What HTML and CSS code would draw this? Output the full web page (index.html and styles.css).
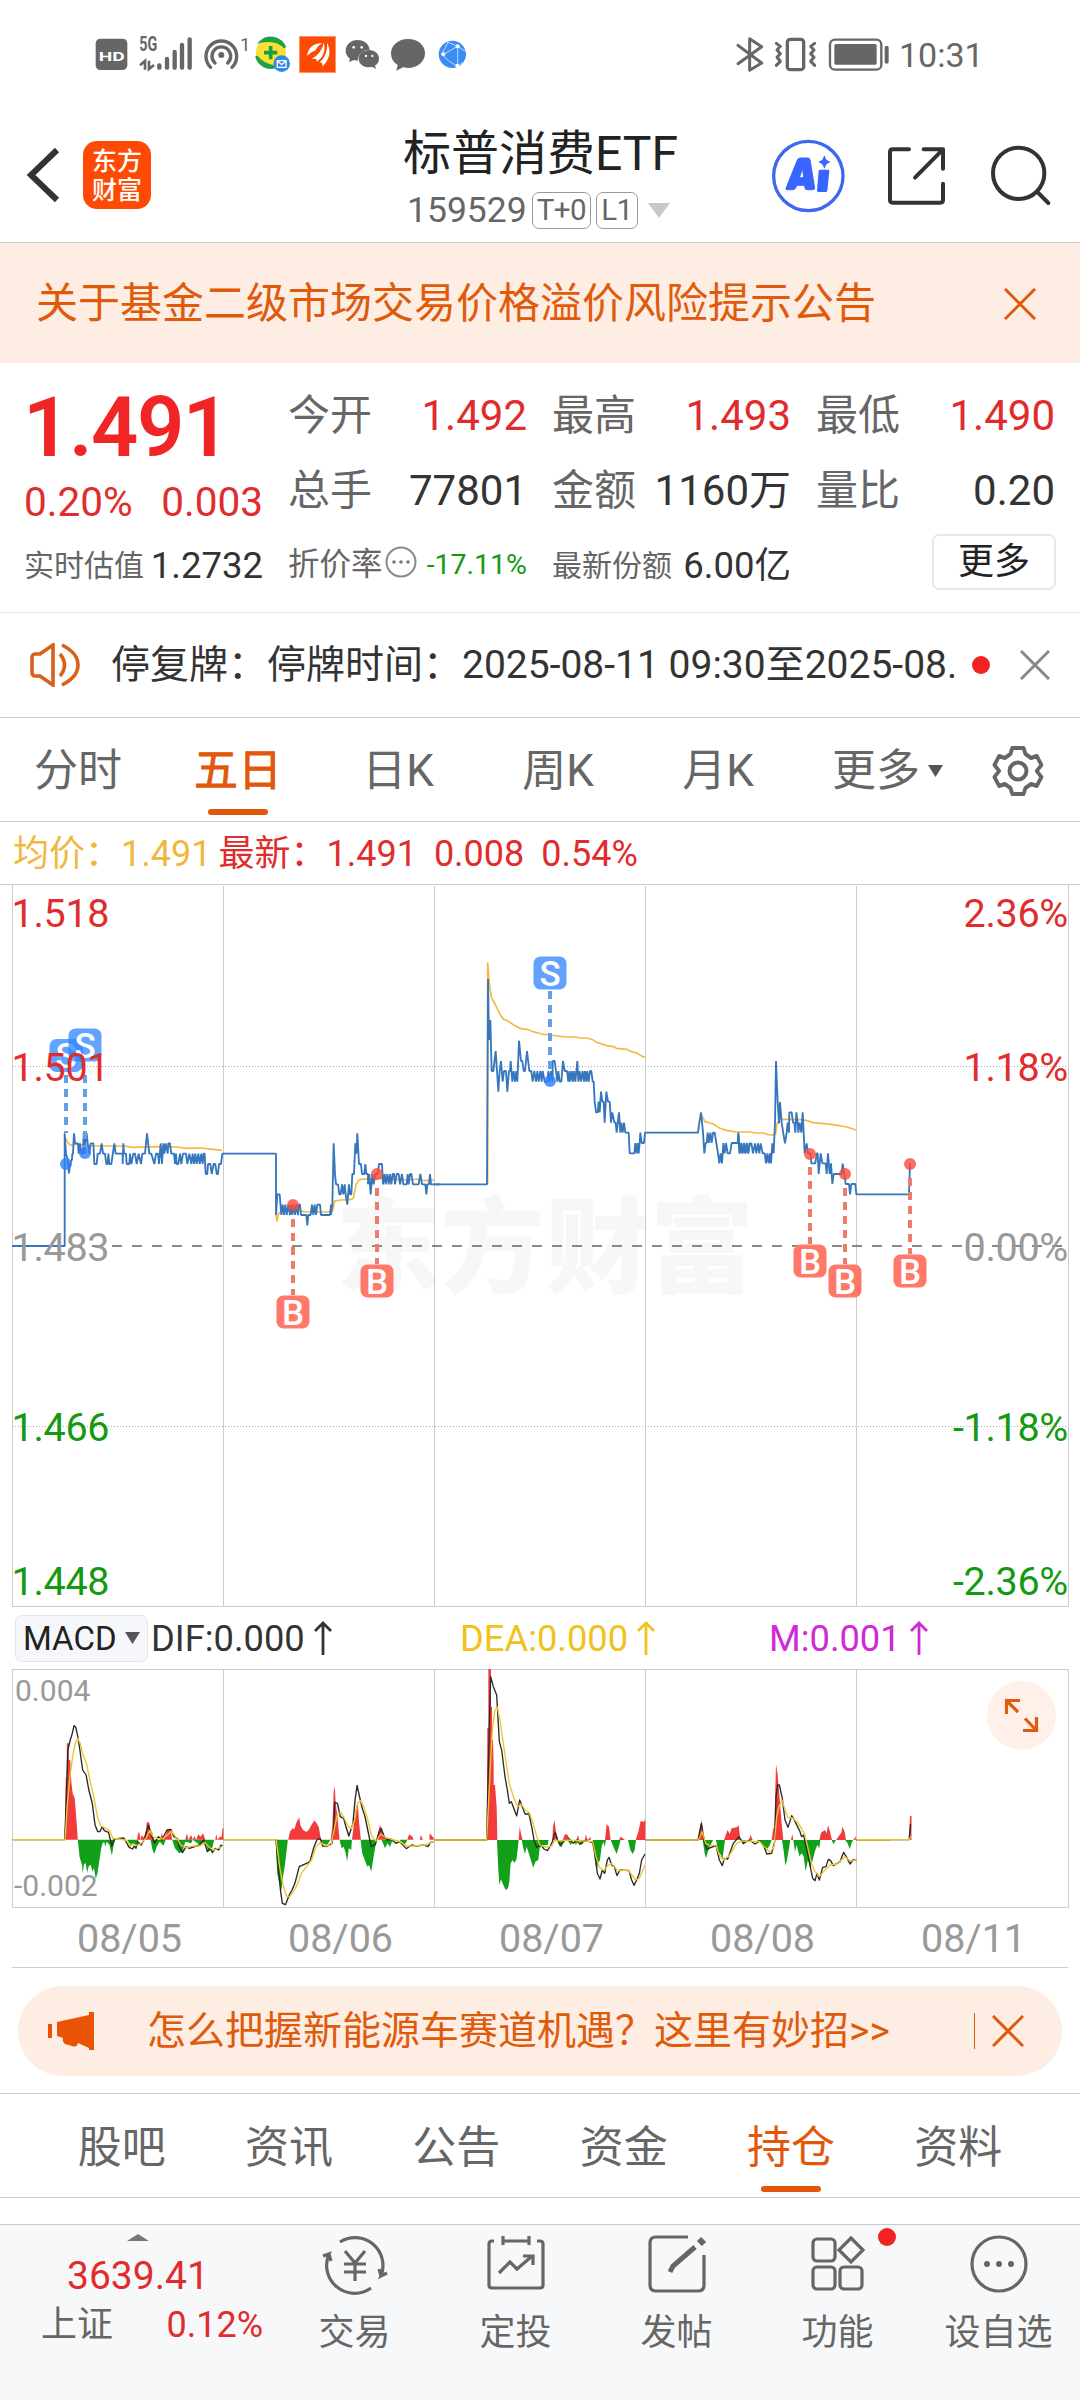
FILE: index.html
```html
<!DOCTYPE html>
<html lang="zh-CN">
<head>
<meta charset="utf-8">
<title>标普消费ETF 159529</title>
<link rel="stylesheet" href="styles.css">
</head>
<body>
<div class="screen">
  <div class="status">
    <svg class="status-left" viewBox="0 0 1200 180">
      <rect x="32" y="41" width="95" height="94" rx="14" fill="#666"/>
      <text x="41" y="108" class="st-hd" textLength="78" lengthAdjust="spacingAndGlyphs">HD</text>
      <text x="163" y="79" class="st-5g" textLength="54" lengthAdjust="spacingAndGlyphs">5G</text>
      <g fill="none" stroke="#666" stroke-width="8"><path d="M180 134V108L165 121M192 107V132L207 120"/></g>
      <g stroke="#666" stroke-width="13" stroke-linecap="round"><path d="M223 121V128M246 102V128M269 81V128M291 60V128M314 43V128"/></g>
      <g fill="none" stroke="#666" stroke-width="10" stroke-linecap="round"><path d="M377 127A46 46 0 1 1 441 127M390 114A28 28 0 1 1 428 114"/></g>
      <circle cx="409" cy="90" r="9" fill="#666"/>
      <text x="465" y="78" class="st-one">1</text>
      <circle cx="558" cy="83" r="45" fill="#fbe032"/>
      <path d="M527 50A45 45 0 0 1 600 68Q575 40 527 50ZM514 94A45 45 0 0 0 572 126Q534 120 514 94Z" fill="#1fa045" stroke="#1fa045" stroke-width="7"/>
      <path d="M557 63V103M537 83H577" stroke="#12a04c" stroke-width="11"/>
      <circle cx="590" cy="116" r="25" fill="#2e8be6"/>
      <path d="M577 107H603V127H577ZM577 107L590 119L603 107" fill="none" stroke="#fff" stroke-width="4"/>
      <rect x="643" y="34" width="109" height="109" fill="#ff4a05" stroke="#f5a080" stroke-width="2"/>
      <path d="M666 92Q672 55 712 54Q696 64 692 76Q680 80 666 92ZM680 102Q712 82 716 53Q726 88 695 110Q698 98 680 102ZM704 112Q730 88 726 53Q746 90 712 125Q714 112 704 112Z" fill="#fff"/>
      <path d="M818 45c-20 0-36 14-36 32 0 10 5 18 13 24l-3 11 14-7 12 2c2-22 15-32 36-33-2-17-17-29-36-29z" fill="#666"/>
      <path d="M852 75c-17 0-31 11-31 26s14 26 31 26l10-1 11 6-3-10c7-5 12-12 12-21 0-15-13-26-30-26z" fill="#666"/>
      <g fill="#fff"><circle cx="806" cy="67" r="4"/><circle cx="830" cy="67" r="4"/><circle cx="843" cy="93" r="3.5"/><circle cx="862" cy="93" r="3.5"/></g>
      <path d="M969 42c-29 0-51 19-51 43 0 15 7 27 20 35l-4 17 20-10 15 2c29 0 51-19 51-44s-22-43-51-43z" fill="#666"/>
      <circle cx="1102" cy="88" r="41" fill="#3b8df5"/>
      <path d="M1089 51Q1080 74 1069 87Q1088 108 1116 124M1118 64L1075 88M1118 64V124M1089 52L1118 64L1142 80M1116 124L1134 112" fill="none" stroke="#bcd9ff" stroke-width="3"/>
      <g fill="#fff"><circle cx="1118" cy="64" r="6"/><circle cx="1075" cy="88" r="6"/><circle cx="1117" cy="122" r="6"/></g>
    </svg>
    <svg class="status-right" viewBox="0 15 540 180">
      <path d="M54 76L125 129L89 151V56L125 80L54 131" fill="none" stroke="#666" stroke-width="9" stroke-linejoin="round" stroke-linecap="round"/>
      <rect x="202" y="58" width="49" height="91" rx="9" fill="none" stroke="#666" stroke-width="10"/>
      <path d="M169 70L181 79L171 90L181 101L171 112L181 124L169 136M284 70L272 79L282 90L272 101L282 112L272 124L284 136" fill="none" stroke="#666" stroke-width="9" stroke-linejoin="round" stroke-linecap="round"/>
      <rect x="330" y="59" width="154" height="90" rx="15" fill="none" stroke="#666" stroke-width="7"/>
      <rect x="343" y="72" width="127" height="62" rx="5" fill="#666"/>
      <rect x="494" y="77" width="12" height="54" rx="6" fill="#666"/>
    </svg>
    <span class="clock">10:31</span>
  </div>

  <header class="header">
    <svg class="back" viewBox="0 0 40 60"><path d="M34 5L8 30L34 55" fill="none" stroke="#333" stroke-width="6"/></svg>
    <div class="logo"><span>东方</span><span>财富</span></div>
    <div class="title">
      <h1>标普消费ETF</h1>
      <div class="code"><span>159529</span><i>T+0</i><i>L1</i><svg viewBox="0 0 22 15"><path d="M0 0H22L11 15Z" fill="#c8c8c8"/></svg></div>
    </div>
    <svg class="actions" viewBox="0 340 900 240">
      <circle cx="112" cy="466" r="104" fill="none" stroke="#3f68f0" stroke-width="10"/>
      <path d="M45 503L80 416Q83 412 90 412H110Q116 412 117 417L131 503Q131 507 125 507H107Q103 507 102 502L101 494H78L73 503Q71 507 66 507H48Q43 507 45 503ZM85 471H98L95 443Z" fill="#3864ff" stroke="#3864ff" stroke-width="3"/>
      <path d="M147 447H171Q175 447 175 451L169 510Q168 514 164 514H142Q138 514 138 509L143 451Q144 447 147 447Z" fill="#3864ff"/>
      <path d="M160 404L166 417L178 424L166 431L160 444L154 431L142 424L154 417Z" fill="#3864ff"/>
      <g fill="none" stroke="#333" stroke-width="12" stroke-linecap="round" stroke-linejoin="round"><path d="M414 386H365Q357 386 357 394V538Q357 546 365 546H508Q516 546 516 538V489M458 386H516V444M516 386L432 471"/><circle cx="743" cy="458" r="77"/><path d="M798 513L832 547"/></g>
    </svg>
  </header>

  <div class="alert"><span>关于基金二级市场交易价格溢价风险提示公告</span><svg viewBox="0 0 32 32"><path d="M1 1L31 31M31 1L1 31" stroke="#e2580a" stroke-width="3"/></svg></div>

  <section class="quote">
    <div class="price-col"><div class="price">1.491</div><div class="change"><span>0.20%</span><span>0.003</span></div></div>
    <div class="cell up"><label>今开</label><b>1.492</b></div>
    <div class="cell up"><label>最高</label><b>1.493</b></div>
    <div class="cell up"><label>最低</label><b>1.490</b></div>
    <div class="cell"><label>总手</label><b>77801</b></div>
    <div class="cell"><label>金额</label><b>1160万</b></div>
    <div class="cell"><label>量比</label><b>0.20</b></div>
    <div class="cell sm"><label>实时估值</label><b>1.2732</b></div>
    <div class="cell sm rate"><label>折价率</label><svg viewBox="0 0 32 32"><circle cx="16" cy="16" r="14.5" fill="none" stroke="#888" stroke-width="2"/><g fill="#777"><circle cx="9" cy="16" r="1.8"/><circle cx="16" cy="16" r="1.8"/><circle cx="23" cy="16" r="1.8"/></g></svg><b>-17.11%</b></div>
    <div class="cell sm"><label>最新份额</label><b>6.00亿</b></div>
    <div class="more-cell"><button>更多</button></div>
  </section>

  <div class="notice">
    <svg class="speaker" viewBox="0 0 50 44" fill="none" stroke="#d9601a" stroke-width="3.6"><path d="M23 2L10 11H5Q2 11 2 15V29Q2 33 5 33H10L23 42Z"/><path d="M30 11Q39 22 30 33M32 2Q48 10 48 22T32 42"/></svg>
    <span class="notice-text">停复牌：停牌时间：2025-08-11 09:30至2025-08.</span>
    <i class="dot"></i>
    <svg class="close" viewBox="0 0 30 30"><path d="M1 1L29 29M29 1L1 29" stroke="#888" stroke-width="3"/></svg>
  </div>

  <nav class="periods">
    <span>分时</span><span class="on">五日</span><span>日K</span><span>周K</span><span>月K</span>
    <span class="drop">更多<svg viewBox="0 0 15 12"><path d="M0 0H15L7.500 12Z" fill="#555"/></svg></span>
    <svg class="gear" viewBox="0 0 52 52" fill="none" stroke="#666" stroke-width="4" stroke-linejoin="round"><path d="M20 3H32L34 9L40 13L46 11L51 20L46 26L51 32L46 41L40 39L34 43L32 49H20L18 43L12 39L6 41L1 32L6 26L1 20L6 11L12 13L18 9Z" transform="translate(1.500 0) scale(.94 1)"/><circle cx="26" cy="26" r="8.500"/></svg>
  </nav>

  <div class="legend"><span class="avg">均价：1.491</span><span>最新：1.491</span><span>0.008</span><span>0.54%</span></div>

  <svg class="chart" viewBox="0 884 1080 723">
    <text x="336" y="1285" class="watermark" textLength="418" lengthAdjust="spacing">东方财富</text>
    <g stroke="#ccc" stroke-width="1" fill="none">
      <path d="M0 884.500H1080M12.500 884V1606M223.500 886V1606M434.500 886V1606M645.500 886V1606M856.500 886V1606M1068.500 884V1606M12 1606.500H1069"/>
      <path d="M12 1066.500H1068M12 1426.500H1068" stroke-dasharray="1 2" stroke="#aaa"/>
    </g>
    <path d="M12 1246H1068" stroke="#888" stroke-width="2" stroke-dasharray="10 10"/>
    <g fill="none" stroke="#f2b944" stroke-width="5">
      <path transform="translate(0 880) scale(.33333)" d="M194 770L202 785L208 793L215 796L225 792L250 795L280 798L375 798L395 802L470 800L530 801L560 805L600 804L640 808L666 811M828 1005L831 1025L836 1000L850 990L900 992L915 996H985L998 992L1004 963L1025 960L1050 959L1060 955L1068 915L1074 903L1085 897L1110 898L1135 895L1170 898L1230 900L1250 897L1270 902L1303 900"/>
      <path transform="translate(420 880) scale(.33333)" d="M203 913V247L208 310L214 352L225 372L241 405L250 417L265 424L280 434L300 445L320 448L340 455L365 462L390 465L430 470L465 471L480 474L500 474L518 479L530 487L560 497L580 500L590 505L620 508L635 515L650 519L670 531H676"/>
      <path transform="translate(640 1000) scale(.33333)" d="M184 345L195 365L210 369L220 372L240 385L260 391L290 396H330L345 399H370L385 404L400 405L407 400L411 370L420 358L440 358L490 359L520 368L580 374L620 381L649 390"/>
    </g>
    <g fill="none" stroke="#3576bd" stroke-width="5.500" stroke-linejoin="bevel">
      <path transform="translate(0 880) scale(.33333)" d="M37 1098H194V760L198 821L203 838L207 880L210 852L216 838L217 821L219 821L222 760L225 790H234L236 821L240 790L244 821H249L251 760L254 821L258 760L260 760L263 790L268 821L272 790H280L283 852L290 852L293 821H300L305 790L309 821H315L319 852H323L325 821L328 852L334 852L343 790L347 821H368V852L370 790L372 821H378L380 852H388L390 821L394 852L400 821H405L410 852L416 821L423 852L427 821H435L441 760L448 821H454L463 852L468 821H474L477 852L482 790L486 852L490 790L493 821L497 790L503 821L505 790L510 790L514 821H522L525 852L528 821L530 852H535L540 821L544 852L549 821H558L562 852L568 821L574 852L578 821L582 852L586 821L590 852L595 821L599 852L604 821L608 852L611 821L614 821L617 882L622 882L624 852H631L635 882L641 852H646L650 882H654L657 852H663L667 821H828V1005L832 943H839L844 1005L848 974L852 1005L856 974L860 1005L865 974L870 1005L873 974L877 1005L881 974L885 1005L889 974L894 1005L896 974H900L903 1005H919L922 1036L925 1005H932L936 974L940 1005L944 974L948 1005L952 974H960L963 1005H990L993 974V1005L997 974L1001 790L1005 882L1008 913H1014L1018 943H1022L1026 913L1030 943L1034 913L1037 943L1042 974L1047 913L1050 943L1054 943L1057 882L1062 882L1066 790L1069 821L1072 760L1077 852L1083 852L1086 882H1093L1096 852L1099 882L1104 882V913L1108 882L1112 943L1117 882L1121 913L1126 882L1133 882L1137 852H1146L1149 913L1154 882L1157 913L1162 882L1166 913L1170 882L1174 913L1178 882L1182 882L1185 913L1190 882L1196 882L1200 913L1206 882L1210 913H1220L1223 882L1226 913L1230 882L1234 882L1239 913H1256L1261 882L1266 913H1276L1279 943L1282 913H1287L1290 882L1293 913H1320"/>
      <path transform="translate(420 880) scale(.33333)" d="M43 913H201L204 297L207 480L211 420L215 573H220L227 513L231 573L235 635L239 573L243 543L248 605L252 573H258L262 635L267 573H270L272 543L277 605L281 573L285 605L289 573L292 605L297 482L303 543L307 543L311 573H315L321 513L328 573H334L338 605L343 573L348 605L352 573L356 605L361 573L365 605L368 573L374 605H382L385 573L389 605L393 573L398 605L398 543H404L408 573L412 605L415 573L419 605H424L429 543L434 573H441L445 605L448 573L451 605L455 573L459 605L462 573L466 605L472 543L475 605L479 573L483 605L488 573L492 605L495 573L499 605L502 573L506 605L510 573H514L518 605H521L524 665L528 697H533L536 665L539 697L543 635L547 665H551L554 728L559 635L564 665L569 665L573 728L577 697L583 728H587L590 758L597 697L601 758L604 728L608 758L612 728L616 758H626L629 820H643L646 789L650 820L653 789L656 820L659 789L661 758L665 789H672L675 758H834L838 728L843 697L849 758L853 820L857 789L860 789L863 758L867 789L871 758L875 789L879 758L884 758L889 789L894 820L898 850L902 820L906 850L910 789L914 820L918 789L923 820L930 820L935 789H953L955 758L958 820L963 789L967 820L972 789L976 820L981 789L984 820L990 789"/>
      <path transform="translate(640 1000) scale(.33333)" d="M295 400L300 460L304 430L308 460L312 430L316 460L320 430L325 460L329 430L334 430L339 460L345 430L349 460L354 430L358 460L362 430L368 460H374L378 490L382 460L386 490L390 460L393 490L397 430L401 460L405 370L408 183L413 305L417 370L420 306L425 368L430 400L435 430L440 398L443 368L447 398L448 337H455L459 368H463L466 398L469 337L473 368L475 398L479 368L484 398L488 337L491 398L494 460L500 430L504 460H512L514 490L526 490L530 460L533 460L536 522L542 460L547 490H557L560 522L564 460L569 522L573 490L577 552L581 522H605L608 491L613 522L617 552L627 552L630 583L634 552H646L649 583H807L810 490"/>
    </g>
    <g stroke="#62a0ec" stroke-width="4" stroke-dasharray="8 6" fill="none"><path d="M66 1075V1133M85 1075V1148M550 991V1070"/></g>
    <g stroke="#ef7b6b" stroke-width="4" stroke-dasharray="8 6" fill="none"><path d="M293 1219V1295M377 1188V1264M810 1167V1244M845 1188V1264M910 1178V1254"/></g>
    <g fill="#2f80fa" fill-opacity=".8"><circle cx="66" cy="1164" r="6"/><circle cx="85" cy="1153" r="6"/><circle cx="550" cy="1081" r="6"/></g>
    <g fill="#fb4a3c" fill-opacity=".8"><circle cx="293" cy="1205" r="6"/><circle cx="377" cy="1174" r="6"/><circle cx="810" cy="1154" r="6"/><circle cx="845" cy="1174" r="6"/><circle cx="910" cy="1164" r="6"/></g>
    <g class="mark">
      <rect x="49.500" y="1039" width="33" height="33" rx="7" fill="#2e84fc" fill-opacity=".75"/><text x="66" y="1068">S</text>
      <rect x="68.500" y="1028.500" width="33" height="33" rx="7" fill="#2e84fc" fill-opacity=".75"/><text x="85" y="1057.500">S</text>
      <rect x="533.500" y="956.500" width="33" height="33" rx="7" fill="#62a2fd"/><text x="550" y="985.500">S</text>
      <rect x="276.500" y="1295.500" width="33" height="33" rx="7" fill="#ff7869"/><text x="293" y="1324.500">B</text>
      <rect x="360.500" y="1264.500" width="33" height="33" rx="7" fill="#ff7869"/><text x="377" y="1293.500">B</text>
      <rect x="793.500" y="1244.500" width="33" height="33" rx="7" fill="#ff7869"/><text x="810" y="1273.500">B</text>
      <rect x="828.500" y="1264.500" width="33" height="33" rx="7" fill="#ff7869"/><text x="845" y="1293.500">B</text>
      <rect x="893.500" y="1254.500" width="33" height="33" rx="7" fill="#ff7869"/><text x="910" y="1283.500">B</text>
    </g>
    <g class="axis">
      <text x="11.500" y="927" class="r">1.518</text><text x="11.500" y="1081" class="r">1.501</text><text x="11.500" y="1261">1.483</text><text x="11.500" y="1441" class="g">1.466</text><text x="11.500" y="1595" class="g">1.448</text>
      <g text-anchor="end"><text x="1068" y="927" class="r">2.36%</text><text x="1068" y="1081" class="r">1.18%</text><text x="1068" y="1261">0.00%</text><text x="1068" y="1441" class="g">-1.18%</text><text x="1068" y="1595" class="g">-2.36%</text></g>
    </g>
  </svg>

  <div class="macd-head">
    <button>MACD<svg viewBox="0 0 15 12"><path d="M0 0H15L7.500 12Z" fill="#555"/></svg></button>
    <span class="dif">DIF:0.000<svg viewBox="0 0 18 34"><path d="M9 34V2M1 10L9 2L17 10"/></svg></span>
    <span class="dea">DEA:0.000<svg viewBox="0 0 18 34"><path d="M9 34V2M1 10L9 2L17 10"/></svg></span>
    <span class="m">M:0.001<svg viewBox="0 0 18 34"><path d="M9 34V2M1 10L9 2L17 10"/></svg></span>
  </div>

  <svg class="macd" viewBox="0 1669 1080 239">
    <path d="M12 1669.500H1068.500V1907.500H12.500V1669M223.500 1669V1907M434.500 1669V1907M645.500 1669V1907M856.500 1669V1907" stroke="#ccc" fill="none"/>
    <g fill="#f23c3c">
      <path transform="translate(0 1590) scale(.34435 .33333)" d="M188 749L191 565H194V460H200V510H204L207 575L211 610L217 625L222 690L226 749ZM398 749L400 735L404 724L408 749L412 735L418 743L424 720L426 697H433L437 720L443 730L448 749ZM465 749L470 728L475 749L482 735L486 718H495L500 749ZM538 749L543 730L547 749L555 735L560 749L565 738L570 749L576 732L582 740L590 730L596 749ZM625 749L628 733L632 749L638 740L644 740L646 715H649V749ZM837 749L842 725L850 715L855 718L860 700L869 682L872 705L880 720L890 726L898 718L904 706L912 692L918 697L926 712L932 749ZM960 749L965 710L969 605L972 589L975 640L980 680L986 749ZM1022 749L1027 710L1034 650L1039 640L1043 700L1048 749ZM1095 749L1098 725L1104 705L1110 725L1120 749ZM1183 749L1188 733L1198 740L1201 749ZM1219 749L1222 735L1228 749ZM1247 749L1248 730L1260 745V749Z"/>
      <path transform="translate(470 1660) scale(.33333)" d="M50 540L52 203H55V27H63V140H66V240H69L71 320V375H75L80 440L82 540ZM146 540L149 500L155 530L158 540ZM247 540L249 500L253 480L258 515L265 540ZM278 540L285 522L293 525L300 540ZM320 540L324 524L328 540ZM345 540L347 523L353 540L362 530V540ZM405 540L410 492L417 500L422 540ZM447 540L452 530L465 540ZM497 540L505 515L512 483L522 485L526 477V540ZM685 540L688 515L695 480L700 520L705 540ZM762 540L768 522L773 510L779 522L785 505L800 502L806 496L811 540ZM837 540L842 525L848 540ZM905 540L909 510L913 500L918 312L923 345L929 415L934 480L940 540ZM963 540L967 523L970 540ZM1048 540L1053 518L1065 510L1070 520L1074 495L1080 515L1086 540ZM1098 540L1105 530L1114 518L1117 500L1124 515L1128 540ZM1150 540L1157 528V540Z"/>
      <path d="M909 1840L910 1816H911.500V1840Z"/>
    </g>
    <g fill="#12a01a">
      <path transform="translate(0 1590) scale(.34435 .33333)" d="M226 749L231 800L238 825L240 850L244 822L249 820L253 848L258 828L264 825L268 845L273 835L278 867L283 850L288 815L294 775L298 760L303 755L305 770L310 755L318 765L325 797L330 765L335 749ZM370 749L378 770L385 760L395 765L402 749ZM437 749L443 780L448 792L455 770L464 755L475 767L481 749ZM500 749L508 775L520 790L530 785L538 755L555 760L560 749L580 765L596 755L605 785L615 780L622 749ZM800 749L805 850L810 875L817 900L822 860L828 820L836 749ZM930 749L940 762L950 764L960 749ZM986 749L992 775L998 770L1004 790L1008 815L1013 775L1020 780L1022 749ZM1047 749L1052 790L1060 812L1067 830L1072 825L1078 845L1085 800L1090 770L1095 749ZM1108 749L1118 775L1125 760L1133 770L1140 749ZM1160 749L1175 765L1183 749Z"/>
      <path transform="translate(470 1660) scale(.33333)" d="M81 540L85 630L88 675L93 658L100 675L107 690L114 685L118 665L122 610L128 600L133 608L139 600L144 560L146 540ZM155 540L160 565L165 582L170 560L175 575L184 605L190 623L196 605L205 600L209 565L218 555L233 555L236 540ZM260 540L268 558L275 562L282 540ZM292 540L302 555L310 540L318 555L325 540L335 555L345 540ZM368 540L374 600L380 632L384 610L390 600L395 560L400 545L404 560L408 540ZM422 540L430 560L440 582L448 555L452 540ZM474 540L481 570L488 582L494 570L498 540ZM698 540L704 580L708 595L715 570L722 555L729 540ZM738 540L745 575L753 585L757 600L761 570L765 540ZM812 540L820 555L828 540ZM860 540L875 550L885 572L897 560L905 540ZM936 540L942 580L946 617L951 600L957 565L961 540ZM970 540L975 575L980 555L988 588L996 580L1001 590L1007 634L1014 600L1020 625L1028 600L1036 570L1042 555L1048 565L1051 540ZM1085 540L1090 553L1098 540ZM1125 540L1133 550L1139 568L1146 545L1150 540Z"/>
    </g>
    <g fill="none" stroke="#2a2a2a" stroke-width="4" stroke-linejoin="round">
      <path transform="translate(0 1590) scale(.34435 .33333)" d="M37 749H188L192 640L197 480L204 450L210 430L215 407L220 412L226 440L232 480L240 540L250 555L258 600L268 640L276 705L284 725H290L297 710L303 722L315 727L325 768L332 747L360 744L375 772L385 777L390 768L395 775L400 755L410 765L420 745L431 705L440 735L448 760L460 740L470 750L485 720L496 718L505 740L515 745L520 770L530 788L540 770L550 775L570 768L580 765L592 750L602 785L610 772L617 788L625 775L635 780L642 765L646 768M649 749H802L807 820L815 905L820 940L829 944L840 915L848 900L857 878L869 830L890 820L900 815L912 770L920 750L930 745L937 768L948 770L964 760L968 735L972 637L980 640L988 680L998 685L1004 708L1013 738L1025 700L1031 630L1037 586L1044 620L1052 655L1060 680L1068 720L1078 770L1090 763L1098 735L1107 715L1115 738L1125 750L1135 747L1150 760L1160 755L1180 776L1195 765L1210 768L1230 765L1243 770L1250 757L1260 755"/>
      <path transform="translate(470 1660) scale(.33333)" d="M-106 540H50L58 200L62 50L70 80L80 105L88 245L95 270L105 350L112 390L118 430L124 425L140 468L149 420L157 440L165 462L177 462L186 505L192 540L200 562L212 553L222 567L232 572L240 560L247 545L255 517L263 540L272 555L285 540L298 537L310 550L320 540L330 553L345 541L368 548L376 590L382 640L390 657L397 630L404 640L412 600L417 592L425 615L433 620L441 647L450 630L477 632L485 660L492 676L500 660L508 640L515 600L525 582M527 540H684L694 490L703 545L711 568L722 563L738 557L748 600L757 617L763 595L773 597L790 550L807 530L820 550L838 540L855 552L870 543L883 560L890 582L905 580L914 545L918 410L923 375H928L937 415L945 480L954 502L965 467L974 482L990 515L995 530L1001 525L1008 560L1018 605L1028 655L1035 662L1041 640L1048 660L1058 622L1068 620L1075 598L1082 602L1090 617L1110 605L1121 577L1130 592L1140 612L1150 598L1159 602M1160 540H1260"/>
      <path transform="translate(540 1590) scale(.34435 .33333)" d="M919 749H1072L1076 702"/>
    </g>
    <g fill="none" stroke="#edc52c" stroke-width="4" stroke-linejoin="round">
      <path transform="translate(0 1590) scale(.34435 .33333)" d="M37 749H189L195 650L203 560L211 500L218 462L225 444L233 460L240 490L252 525L262 575L272 620L283 680L293 708L305 714L318 722L328 745L345 747L365 750L380 765L400 767L412 758L425 742L435 722L445 740L455 745L470 747L483 738L498 724L510 740L525 765L540 773L560 768L580 768L595 757L608 772L620 780L646 770M649 749H802L812 830L822 885L832 918L842 920L855 900L865 880L875 850L890 830L905 810L918 770L930 757L945 768L962 765L972 710L980 672L990 668L1000 685L1010 708L1020 716L1030 690L1038 640L1047 632L1056 650L1067 685L1080 740L1092 753L1106 732L1120 743L1145 750L1160 754L1180 768L1200 768L1235 765L1260 754"/>
      <path transform="translate(470 1660) scale(.33333)" d="M-106 540H50L58 380L67 210L74 155L81 140L89 175L97 230L107 300L118 370L130 410L143 440L155 433L165 450L177 457L188 485L200 530L210 555L230 562L245 558L255 540L270 543L290 540L340 543L368 545L378 590L388 622L402 632L412 618L425 610L443 632L475 630L485 645L497 660L508 655L525 615M527 540H685L697 515L707 550L720 557L737 555L750 590L760 600L778 587L800 550L815 543L870 545L885 562L900 577L912 560L920 470L927 440L936 420L944 445L953 472L968 474L985 490L1003 520L1013 560L1023 605L1035 635L1048 650L1063 632L1080 615L1100 612L1125 590L1140 602L1159 600M1160 540H1260"/>
      <path transform="translate(540 1590) scale(.34435 .33333)" d="M919 749H1072L1078 738"/>
    </g>
    <text x="15" y="1701">0.004</text><text x="14" y="1896">-0.002</text>
    <circle cx="1021.500" cy="1715.500" r="34.500" fill="#fff1ea"/>
    <path d="M1018 1712L1006.500 1700.500M1006.500 1714V1700.500H1020M1025 1718.500L1036.500 1730.500M1036.500 1717V1730.500H1023" fill="none" stroke="#e05b10" stroke-width="3.200"/>
  </svg>

  <div class="dates"><span>08/05</span><span>08/06</span><span>08/07</span><span>08/08</span><span>08/11</span></div>

  <div class="promo">
    <svg class="horn" viewBox="0 0 46 40" fill="#e95404"><path d="M41 1H46V39H41V37L30 32Q29 37 24 35L17 33Q14 31 15 27L9 25V11L41 4ZM0 13H4V27H0Z"/></svg>
    <span>怎么把握新能源车赛道机遇？这里有妙招&gt;&gt;</span>
    <i></i>
    <svg class="close" viewBox="0 0 32 32"><path d="M1 1L31 31M31 1L1 31" stroke="#e2580a" stroke-width="3"/></svg>
  </div>

  <nav class="sections"><span>股吧</span><span>资讯</span><span>公告</span><span>资金</span><span class="on">持仓</span><span>资料</span></nav>

  <footer class="toolbar">
    <div class="index">
      <svg viewBox="0 0 22 7"><path d="M0 7L11 0L22 7Z" fill="#777"/></svg>
      <div class="index-value">3639.41</div>
      <div class="index-row"><span>上证</span><b>0.12%</b></div>
    </div>
    <div class="tool"><svg viewBox="0 0 66 60"><path d="M18 7A28 28 0 0 1 59 41L65 38M59 41L57 34M49 53A28 28 0 0 1 7 19L1 21M7 19L9 26M23 16L33 28L43 16M33 28V46M22 29H44M22 37H44"/></svg><span>交易</span></div>
    <div class="tool"><svg viewBox="0 0 66 60"><path d="M11 6H9Q6 6 6 9V50Q6 53 9 53H57Q60 53 60 50V9Q60 6 57 6H54M20 1V10M46 1V10M20 6H46M16 38L27 27L34 34L48 22M40 21H50V30"/></svg><span>定投</span></div>
    <div class="tool"><svg viewBox="0 0 66 60"><path d="M44 2H12Q6 2 6 8V50Q6 56 12 56H54Q60 56 60 50V20"/><path d="M26 37L29 31L51 12" stroke-width="5"/><path d="M55 4L60 9" stroke-width="6"/></svg><span>发帖</span></div>
    <div class="tool"><svg viewBox="0 0 66 60"><rect x="8" y="4" width="22" height="22" rx="4"/><rect x="8" y="32" width="22" height="22" rx="4"/><rect x="35" y="32" width="22" height="22" rx="4"/><path d="M46 3L58 15L46 27L34 15Z"/></svg><i class="badge"></i><span>功能</span></div>
    <div class="tool"><svg viewBox="0 0 66 60"><circle cx="33" cy="29" r="27"/><g fill="#666" stroke="none"><circle cx="21" cy="29" r="3"/><circle cx="33" cy="29" r="3"/><circle cx="45" cy="29" r="3"/></g></svg><span>设自选</span></div>
  </footer>
</div>
</body>
</html>
```
FILE: styles.css
```css
* { box-sizing: border-box; }
body { margin: 0; background: #fff; }
.screen { width: 1080px; height: 2400px; overflow: hidden; display: flex; flex-direction: column; font-family: Roboto, "Noto Sans CJK SC", sans-serif; color: #333; }
.screen > * { flex: none; }
svg { display: block; flex: none; }
i, b { font-style: normal; font-weight: 400; }
button { font-family: inherit; color: #222; padding: 0; margin: 0; }

.status { height: 108px; padding: 25px 0 0 85px; display: flex; align-items: flex-start; color: #666; }
.status-left { width: 400px; height: 60px; }
.status-right { width: 180px; height: 60px; margin-left: 235px; }
.clock { font-size: 34px; line-height: 60px; letter-spacing: 0; margin-left: -1px; }
.st-hd { font: 700 40px Roboto; fill: #fff; }
.st-5g { font: 700 60px Roboto; fill: #666; }
.st-one { font: 400 56px Roboto; fill: #666; }

.header { height: 135px; border-bottom: 1px solid #ccc; display: flex; align-items: flex-start; }
.back { width: 40px; height: 60px; margin: 37px 0 0 23px; }
.logo { width: 68px; height: 68px; margin: 33px 0 0 20px; border-radius: 14px; background: #ff4a05; color: #fff; font-size: 25px; font-weight: 500; line-height: 29px; padding-top: 6px; display: flex; flex-direction: column; align-items: center; }
.title { width: 280px; margin-left: 250px; }
h1 { margin: 18px 0 0 2px; font-size: 48px; line-height: 56px; font-weight: 400; color: #222; white-space: nowrap; }
.code { display: flex; align-items: center; height: 37px; margin: 10px 0 0 6px; font-size: 35.500px; line-height: 37px; color: #666; }
.code i { font-size: 29.500px; height: 37px; line-height: 34px; border: 1.5px solid #999; border-radius: 7px; padding: 0 4px; margin-left: 5px; letter-spacing: -.5px; }
.code svg { width: 22px; height: 15px; margin-left: 10px; }
.actions { width: 300px; height: 80px; margin: 26px 0 0 90px; }

.alert { height: 120px; background: #fdede3; color: #e05a0c; font-size: 42px; line-height: 120px; display: flex; align-items: center; justify-content: space-between; padding: 2px 44px 0 36px; }
.alert svg { width: 32px; height: 32px; }

.quote { height: 250px; padding: 0 25px; border-bottom: 1px solid #e8e8e8; display: grid; grid-template-columns: repeat(4, 238px); column-gap: 26px; grid-template-rows: 90px 75px 73px; align-content: start; }
.price-col { grid-row: 1 / 3; color: #f02626; }
.price { font-size: 83px; font-weight: 600; line-height: 84px; padding-top: 23px; letter-spacing: -1.500px; margin-left: -2px; }
.change { display: flex; justify-content: space-between; font-size: 40.500px; line-height: 40px; color: #e02c2c; margin: 12px 0 0 -1px; }
.cell { display: flex; justify-content: space-between; font-size: 42px; line-height: 75px; white-space: nowrap; color: #333; }
.cell.up { padding-top: 15px; }
.cell label { color: #666; margin-left: -1px; }
.cell.up b { color: #e02c2c; }
.cell.sm { font-size: 36.500px; }
.cell.sm label { font-size: 30px; }
.cell.rate { align-items: center; }
.cell.rate label { font-size: 31.500px; }
.cell.rate svg { width: 32px; height: 32px; margin: -5px 0 0 0; }
.cell.rate b { font-size: 28.500px; color: #149a10; margin-left: 8px; }
.more-cell { display: flex; justify-content: flex-end; padding-top: 6px; }
.more-cell button { width: 124px; height: 56px; border: 2px solid #e8e8e8; border-radius: 7px; background: #fff; font-size: 36px; line-height: 52px; margin-right: -1px; }

.notice { height: 105px; border-bottom: 1px solid #ccc; display: flex; align-items: center; padding: 0 30px; }
.speaker { width: 50px; height: 44px; }
.notice-text { font-size: 39px; line-height: 60px; margin: -1px 0 0 31px; white-space: nowrap; flex: 1; }
.dot { width: 18px; height: 18px; border-radius: 50%; background: #f02222; margin-right: 30px; }
.notice .close { width: 30px; height: 30px; }

.periods { height: 104px; border-bottom: 1px solid #ccc; display: grid; grid-template-columns: repeat(6, 160px) 1fr; align-items: center; margin-left: -2px; padding-right: 0; font-size: 44px; color: #666; line-height: 106px; }
.periods > span, .sections > span { text-align: center; position: relative; height: 100%; }
.periods .on, .sections .on { color: #e2580a; }
.periods .on { -webkit-text-stroke: .8px #e2580a; }
.on::after { content: ""; position: absolute; left: 50%; margin-left: -30px; bottom: 9px; width: 60px; height: 6px; border-radius: 3px; background: #e2580a; }
.sections .on::after { bottom: 10px; }
.periods .drop { display: flex; align-items: center; padding-left: 34px; }
.drop svg { width: 15px; height: 12px; margin-left: 8px; }
.gear { width: 52px; height: 52px; margin-left: 34px; }

.legend { height: 62px; display: flex; padding-left: 13px; font-size: 36px; line-height: 64px; color: #e02c2c; white-space: nowrap; }
.legend span { margin-right: 17px; }
.legend .avg { color: #f0b840; margin-right: 7px; }

.chart { width: 1080px; height: 723px; }
.watermark { font: 900 104px "Noto Sans CJK SC"; fill: #f7f7f7; }
.mark text { font: 500 35px Roboto; fill: #fff; text-anchor: middle; }
.axis text { font: 400 39.500px Roboto; fill: #999; letter-spacing: -.3px; }
.axis .r { fill: #e02c2c; }
.axis .g { fill: #149a10; }

.macd-head { height: 62px; display: grid; grid-template-columns: 136px 309px 309px 1fr; padding-left: 15px; align-items: center; font-size: 36.300px; }
.macd-head button { width: 133px; height: 47px; border: 1.5px solid #e3e4e8; border-radius: 7px; background: #f6f7fa; font-size: 33px; display: flex; align-items: center; padding-left: 7px; }
.macd-head button svg { width: 15px; height: 12px; margin-left: 8px; }
.macd-head span { display: flex; align-items: center; }
.macd-head span svg { width: 18px; height: 34px; margin-left: 9px; fill: none; stroke: currentColor; stroke-width: 2.800; }
.dea { color: #efc21c; }
.m { color: #d029d6; }
.macd { width: 1080px; height: 239px; }
.macd text { font: 400 30px Roboto; fill: #999; }

.dates { height: 60px; margin: 0 12px; padding-left: 12px; border-bottom: 1px solid #ccc; display: flex; font-size: 39.500px; line-height: 62px; color: #999; }
.dates span { flex: none; width: 211px; text-align: center; }

.promo { height: 90px; margin: 18px 18px 17px; border-radius: 45px; background: #fdede3; color: #e05a0c; font-size: 39px; display: flex; align-items: center; padding: 0 38px 0 30px; }
.promo .horn { width: 46px; height: 40px; }
.promo span { margin: -1px 0 0 53px; flex: 1; line-height: 60px; white-space: nowrap; }
.promo i { width: 1.500px; height: 36px; background: #e05a0c; margin-right: 17px; }
.promo .close { width: 32px; height: 32px; }

.sections { height: 105px; border: solid #ccc; border-width: 1px 0; padding: 0 38px; display: grid; grid-template-columns: repeat(6, 1fr); font-size: 44px; line-height: 108px; color: #666; }

.toolbar { height: 176px; margin-top: 26px; background: #f7f8fa; border-top: 1px solid #ccc; display: grid; grid-template-columns: 274px repeat(5, 161px); color: #666; font-size: 36px; }
.index { padding-top: 9px; color: #e02c2c; }
.index svg { width: 22px; height: 7px; margin-left: 127px; }
.index-value { font-size: 39px; line-height: 40px; margin: 15px 0 0 67px; }
.index-row { display: flex; justify-content: space-between; padding: 0 11px 0 41px; line-height: 36px; margin-top: 11px; }
.index-row span { color: #666; }
.tool { display: flex; flex-direction: column; align-items: center; padding-top: 10px; position: relative; }
.tool svg { width: 66px; height: 60px; fill: none; stroke: #666; stroke-width: 3.200; }
.tool span { line-height: 40px; margin-top: 18px; }
.badge { position: absolute; left: 121px; top: 3px; width: 18px; height: 18px; border-radius: 50%; background: #f02222; }
```
